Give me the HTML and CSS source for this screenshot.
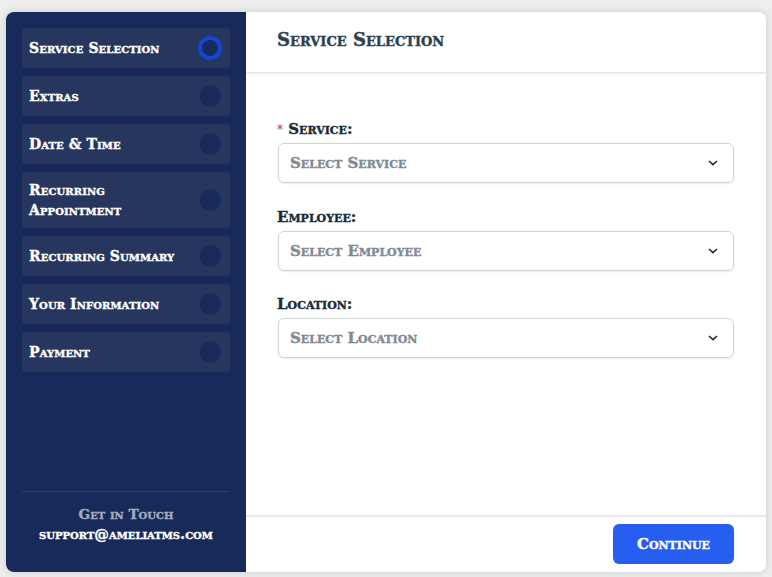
FILE: index.html
```html
<!DOCTYPE html>
<html lang="en">
<head>
    <meta charset="UTF-8">
    <meta name="viewport" content="width=device-width, initial-scale=1.0">
    <title>Service Selection</title>
    <link rel="stylesheet" href="styles.css">
</head>
<body>
    <div class="booking">
        <aside class="sidebar">
            <div class="steps">
                <div class="step"><span class="step-name">Service Selection</span><span class="dot dot-active"></span></div>
                <div class="step"><span class="step-name">Extras</span><span class="dot"></span></div>
                <div class="step"><span class="step-name">Date &amp; Time</span><span class="dot"></span></div>
                <div class="step step-tall"><span class="step-name">Recurring<br>Appointment</span><span class="dot"></span></div>
                <div class="step"><span class="step-name">Recurring Summary</span><span class="dot"></span></div>
                <div class="step"><span class="step-name">Your Information</span><span class="dot"></span></div>
                <div class="step"><span class="step-name">Payment</span><span class="dot"></span></div>
            </div>
            <div class="contact">
                <div class="contact-title">Get in Touch</div>
                <div class="contact-mail">support@ameliatms.com</div>
            </div>
        </aside>
        <main class="panel">
            <header class="panel-head">Service Selection</header>
            <div class="panel-body">
                <div class="field">
                    <label class="field-label"><span class="required">*</span> Service:</label>
                    <div class="select">
                        <span>Select Service</span>
                        <svg class="chevron" viewBox="0 0 10 6"><path d="M1 1l4 3.6L9 1" fill="none" stroke="#1a2c37" stroke-width="1.6"/></svg>
                    </div>
                </div>
                <div class="field">
                    <label class="field-label">Employee:</label>
                    <div class="select">
                        <span>Select Employee</span>
                        <svg class="chevron" viewBox="0 0 10 6"><path d="M1 1l4 3.6L9 1" fill="none" stroke="#1a2c37" stroke-width="1.6"/></svg>
                    </div>
                </div>
                <div class="field">
                    <label class="field-label">Location:</label>
                    <div class="select">
                        <span>Select Location</span>
                        <svg class="chevron" viewBox="0 0 10 6"><path d="M1 1l4 3.6L9 1" fill="none" stroke="#1a2c37" stroke-width="1.6"/></svg>
                    </div>
                </div>
            </div>
            <footer class="panel-foot">
                <button class="continue-btn">Continue</button>
            </footer>
        </main>
    </div>
</body>
</html>
```

FILE: styles.css
```css
html, body {
    height: 100%;
}
body {
    margin: 0;
    padding: 12px 6px 5px;
    box-sizing: border-box;
    height: 577px;
    overflow: hidden;
    background-color: #eeeeee;
    font-family: "DejaVu Serif", "Liberation Serif", serif;
    font-weight: bold;
    font-variant: small-caps;
    -webkit-text-stroke: 0.4px currentColor;
}
.booking {
    display: flex;
    height: 560px;
    border-radius: 8px;
    overflow: hidden;
    background-color: white;
    box-shadow: 0 0 8px rgba(0, 0, 0, 0.15);
}
.sidebar {
    width: 240px;
    flex-shrink: 0;
    box-sizing: border-box;
    padding: 16px 16px 0;
    display: flex;
    flex-direction: column;
    justify-content: space-between;
    background-color: #182a5a;
    color: white;
}
.steps {
    display: flex;
    flex-direction: column;
    gap: 8px;
}
.step {
    display: flex;
    align-items: center;
    justify-content: space-between;
    height: 40px;
    padding: 0 8px 0 7px;
    border-radius: 4px;
    background-color: #26365f;
    font-size: 14px;
    letter-spacing: 0.1px;
}
.step-tall {
    height: 56px;
    line-height: 20px;
}
.dot {
    width: 24px;
    height: 24px;
    box-sizing: border-box;
    border-radius: 50%;
    background-color: #182a5a;
    border: 1px solid #2b3a63;
}
.dot-active {
    border: 4px solid #1246d6;
}
.contact {
    height: 81px;
    box-sizing: border-box;
    padding-top: 13px;
    border-top: 1px solid #2e3e6b;
    text-align: center;
}
.contact-title {
    font-size: 13.6px;
    line-height: 18px;
    color: #a3abbd;
}
.contact-mail {
    margin-top: 3px;
    font-size: 14.6px;
    line-height: 16px;
    text-transform: lowercase;
}
.panel {
    flex-grow: 1;
    display: flex;
    flex-direction: column;
    min-width: 0;
}
.panel-head {
    height: 61px;
    box-sizing: border-box;
    padding: 16px 31px 0;
    font-size: 18px;
    line-height: 24px;
    color: #2d4050;
    border-bottom: 1px solid #e6e6e6;
    box-shadow: 0 1px 3px rgba(0, 0, 0, 0.08);
}
.panel-body {
    flex-grow: 1;
    padding: 47px 32px 0 31px;
}
.field {
    margin-bottom: 24.5px;
}
.field-label {
    display: block;
    height: 23px;
    font-size: 15px;
    line-height: 18px;
    color: #1a2c37;
}
.required {
    color: #c0392b;
    font-weight: normal;
    font-size: 12px;
    -webkit-text-stroke: 0;
}
.select {
    display: flex;
    align-items: center;
    justify-content: space-between;
    height: 40px;
    box-sizing: border-box;
    margin-left: 1px;
    padding: 0 15px 0 11px;
    border: 1px solid #d0d3d6;
    border-radius: 6px;
    box-shadow: 0 1px 2px rgba(0, 0, 0, 0.08);
    font-size: 15px;
    color: #808a94;
}
.chevron {
    width: 10px;
    height: 6px;
}
.panel-foot {
    height: 57px;
    box-sizing: border-box;
    display: flex;
    justify-content: flex-end;
    padding: 7px 32px 0 0;
    border-top: 2px solid #e8e8e8;
}
.continue-btn {
    width: 121px;
    height: 40px;
    border: none;
    border-radius: 6px;
    background-color: #265ef0;
    color: white;
    font-family: inherit;
    font-weight: bold;
    font-variant: small-caps;
    font-size: 15px;
    cursor: pointer;
}
```
